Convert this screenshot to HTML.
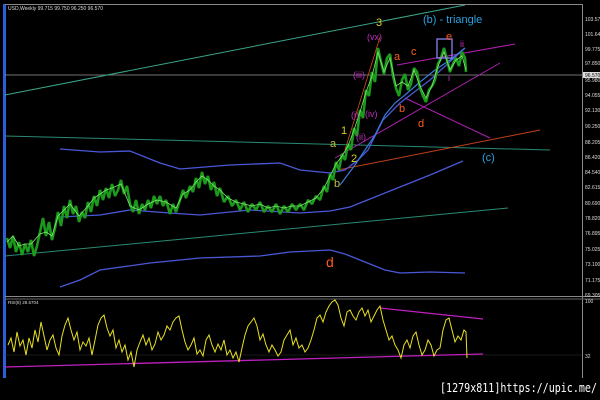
<!DOCTYPE html>
<html><head><meta charset="utf-8"><style>
html,body{margin:0;padding:0;background:#000;width:600px;height:400px;overflow:hidden}
svg{display:block}
text{font-family:"Liberation Sans",sans-serif}
.ax{font-size:5px;fill:#ddd}
</style></head><body>
<svg width="600" height="400" viewBox="0 0 600 400" xmlns="http://www.w3.org/2000/svg">
<rect width="600" height="400" fill="#000"/>
<rect x="3" y="4" width="3" height="374" fill="#2b5fd9"/>
<line x1="5" y1="4.5" x2="583" y2="4.5" stroke="#888" stroke-width="1"/>
<line x1="582.5" y1="4" x2="582.5" y2="378" stroke="#888" stroke-width="1"/>
<line x1="5" y1="296.5" x2="600" y2="296.5" stroke="#888" stroke-width="1"/>
<line x1="5" y1="299" x2="600" y2="299" stroke="#666" stroke-width="1"/>
<line x1="5" y1="75" x2="582" y2="75" stroke="#999" stroke-width="0.8"/>
<line x1="5" y1="355" x2="582" y2="355" stroke="#333" stroke-width="0.6"/>
<text x="8" y="10" style="font-size:5px;fill:#ddd">USD,Weekly  99.715 99.750 96.250 96.570</text>
<text x="8" y="304" style="font-size:4.5px;fill:#ddd">RSI(8) 28.6704</text>
<g class="ax">
<text x="585" y="21">103.575</text><text x="585" y="36">101.646</text><text x="585" y="51">99.775</text>
<text x="585" y="65">97.850</text><text x="585" y="82">95.980</text><text x="585" y="97">94.055</text>
<text x="585" y="112">92.130</text><text x="585" y="128">90.250</text><text x="585" y="144">88.205</text>
<text x="585" y="159">86.420</text><text x="585" y="174">84.540</text><text x="585" y="189">82.615</text>
<text x="585" y="205">80.690</text><text x="585" y="220">78.820</text><text x="585" y="235">76.895</text>
<text x="585" y="251">75.025</text><text x="585" y="266">73.100</text><text x="585" y="282">71.175</text>
<text x="585" y="297">69.305</text><text x="585" y="303">100</text><text x="585" y="358">32</text>
</g>
<rect x="583" y="72" width="17" height="6" fill="#ddd"/>
<text x="585" y="77" style="font-size:5px;fill:#000">96.570</text>
<line x1="5" y1="95" x2="465" y2="5" stroke="#3aa58a" stroke-width="1"/>
<line x1="5" y1="136" x2="550" y2="150" stroke="#2a8a74" stroke-width="1"/>
<line x1="5" y1="256" x2="508" y2="208" stroke="#2a8a74" stroke-width="1"/>
<line x1="338" y1="170" x2="540" y2="130" stroke="#c0401a" stroke-width="1"/>
<line x1="345" y1="150" x2="380" y2="37" stroke="#d0501a" stroke-width="0.8"/>
<line x1="397" y1="65" x2="515" y2="44" stroke="#b020b0" stroke-width="1"/>
<line x1="335" y1="158" x2="500" y2="63" stroke="#b020b0" stroke-width="1"/>
<line x1="405" y1="98" x2="490" y2="138" stroke="#b020b0" stroke-width="1"/>
<g fill="none" stroke="#4a58d8" stroke-width="1.3">
<polyline points="60,149 100,152 130,151 160,163 180,169 230,165 280,163 300,170 330,173 345,170 358,160 368,150 383,120 400,103 430,80 465,48"/>
<polyline points="60,217 100,215 130,210 170,213 200,215 250,210 300,213 330,211 350,207 375,197 400,187 430,175 463,161"/>
<polyline points="60,287 80,280 100,270 150,263 200,258 260,256 290,252 330,250 345,254 370,264 385,270 400,273 430,272 465,273"/>
</g>
<polyline fill="none" stroke="#3a7ad8" stroke-width="1.2" points="340,185 355,165 365,150 375,135 385,115 395,103 405,95 420,82 435,70 450,60 465,48"/>
<polyline fill="none" stroke="#1c9a1c" stroke-width="2.6" stroke-linejoin="bevel" points="7,238 10,248 13,236 16,252 19,242 22,255 25,244 28,252 31,240 34,256 37,246 40,232 43,218 46,236 49,222 52,240 55,228 58,212 61,226 64,206 67,218 70,200 73,214 76,206 79,222 82,212 85,218 88,202 91,212 94,196 97,206 100,190 103,200 106,188 109,198 112,184 115,196 118,190 121,180 124,194 127,186 130,204 133,212 136,200 139,214 142,204 145,210 148,200 151,208 154,196 157,204 160,196 163,206 166,200 170,214 173,204 176,212 180,200 183,190 186,198 190,186 193,192 196,178 199,188 202,172 205,184 208,176 211,190 214,182 217,196 220,188 224,202 228,196 232,206 236,200 240,210 244,202 248,212 252,204 256,210 260,202 264,212 268,206 272,212 276,204 280,214 284,206 288,212 292,204 296,210 300,204 304,210 308,200 312,204 316,196 320,200 324,186 327,192 330,174 333,180 336,162 339,170 342,154 345,160 348,144 351,150 354,128 357,136 360,110 363,118 366,90 369,96 372,72 375,82 378,48 381,62 384,74 387,58 390,54 393,76 396,88 399,96 402,80 405,74 408,90 411,84 414,68 417,72 420,88 423,96 426,102 429,90 432,86 435,80 438,64 441,58 444,48 447,60 450,72 453,64 456,58 459,66 462,52 465,58 466,72"/>
<polyline fill="none" stroke="#7ee86e" stroke-width="0.8" points="7,242 13,236 19,246 25,244 31,244 40,234 46,232 52,236 58,216 64,210 70,204 79,216 88,206 94,198 100,194 106,190 112,188 121,184 130,206 139,210 148,204 157,200 166,202 176,208 183,194 190,190 196,182 202,176 208,180 214,186 220,190 228,198 236,202 244,204 252,206 260,204 268,208 276,206 284,208 292,206 300,206 308,202 316,198 324,188 330,176 336,164 342,156 348,146 354,130 360,112 366,92 372,76 378,52 384,72 390,58 396,86 402,82 408,86 414,70 420,86 426,98 432,86 438,66 444,52 450,70 456,60 462,56 466,70"/>
<rect x="437" y="39" width="15" height="19" fill="none" stroke="#8a80f0" stroke-width="1.3"/>
<g style="font-size:11px">
<text x="376" y="26" fill="#d8d020">3</text>
<text x="423" y="23" fill="#2aa0e0">(b) - triangle</text>
<text x="367" y="40" fill="#c030c0" style="font-size:9px">(vx)</text>
<text x="353" y="78" fill="#c030c0" style="font-size:9px">(iii)</text>
<text x="351" y="118" fill="#c030c0" style="font-size:9px">(i)</text>
<text x="365" y="117" fill="#c030c0" style="font-size:9px">(iv)</text>
<text x="356" y="140" fill="#c030c0" style="font-size:9px">(ii)</text>
<text x="394" y="60" fill="#ff5a1a">a</text>
<text x="411" y="55" fill="#ff5a1a">c</text>
<text x="446" y="40" fill="#ff5a1a">e</text>
<text x="460" y="47" fill="#c030c0" style="font-size:9px">ii</text>
<text x="448" y="81" fill="#c030c0" style="font-size:9px">i</text>
<text x="399" y="112" fill="#ff5a1a">b</text>
<text x="418" y="127" fill="#ff5a1a">d</text>
<text x="341" y="134" fill="#d8d020">1</text>
<text x="330" y="147" fill="#b8c040">a</text>
<text x="351" y="162" fill="#d8d020">2</text>
<text x="334" y="187" fill="#b8c040">b</text>
<text x="482" y="161" fill="#2aa0e0">(c)</text>
<text x="326" y="267" fill="#ff5a1a" style="font-size:14px">d</text>
</g>
<line x1="5" y1="367" x2="483" y2="354" stroke="#c020c0" stroke-width="1.3"/>
<line x1="380" y1="308" x2="483" y2="319" stroke="#c020c0" stroke-width="1.3"/>
<polyline fill="none" stroke="#e8e020" stroke-width="1" points="8,345 11,338 14,352 17,332 20,346 23,340 26,355 29,338 32,348 35,330 38,342 41,322 44,336 47,350 50,340 53,335 56,348 59,355 62,336 65,325 68,318 71,330 74,340 77,332 80,350 83,342 86,346 89,338 92,355 95,340 98,325 101,318 104,315 107,328 110,336 113,330 116,348 119,340 122,352 125,345 128,360 131,352 134,367 137,350 140,342 143,335 146,345 149,338 152,350 155,344 158,332 161,340 164,335 167,326 170,330 173,322 176,318 179,316 182,330 185,342 188,350 191,345 194,338 197,354 200,350 203,356 206,340 209,335 212,345 215,352 218,344 221,350 224,340 227,355 230,350 233,358 236,352 239,362 242,348 245,335 248,326 251,322 254,318 257,326 260,340 263,334 266,345 269,352 272,345 275,350 278,356 281,352 284,340 287,335 290,330 293,345 296,338 299,348 302,345 305,352 308,348 311,340 314,330 317,318 320,315 323,322 326,312 329,306 332,302 335,300 338,305 341,318 344,326 347,312 350,310 353,316 356,320 359,312 362,308 365,316 368,310 371,322 374,316 377,310 380,306 383,320 386,330 389,340 392,336 395,345 398,350 401,358 404,345 407,340 410,348 413,336 416,332 419,345 422,355 425,350 428,340 431,345 434,356 437,350 440,348 443,330 446,320 449,318 452,330 455,342 458,336 461,340 464,330 466,332 467,358"/>
<text x="440" y="392" textLength="157" lengthAdjust="spacingAndGlyphs" style="font-size:12px;fill:#fff;font-family:'DejaVu Sans Mono',monospace">[1279x811]https://upic.me/</text>
</svg>
</body></html>
